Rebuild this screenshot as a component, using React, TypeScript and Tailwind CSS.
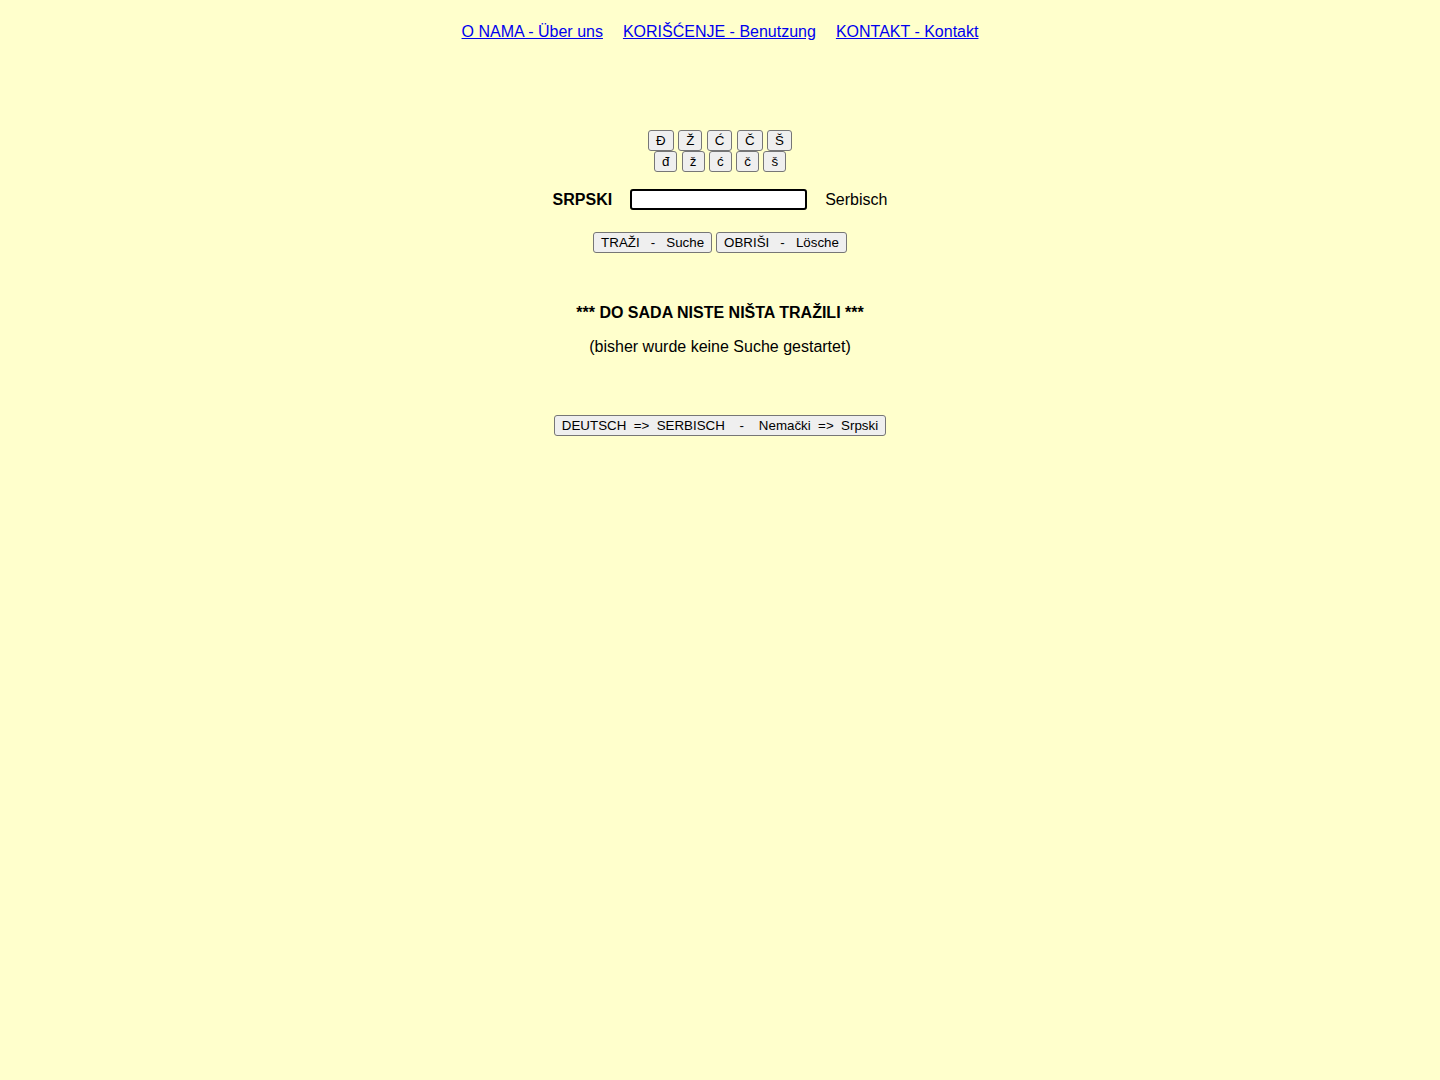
import React from "react";

const btn =
  "bg-[#efefef] border border-[#767676] rounded-[3px] text-[13.333px] leading-[15px] text-black py-[2px] whitespace-pre";

export default function App() {
  const upper = ["Đ", "Ž", "Ć", "Č", "Š"];
  const lower = ["đ", "ž", "ć", "č", "š"];
  return (
    <div className="min-h-[1080px] w-full bg-[#ffffcc] text-black font-['Liberation_Sans',Arial,sans-serif] text-[16px]">
      <div className="flex justify-center gap-[20px] pt-[22px] leading-[20px]">
        <a href="#" className="text-[#0000ee] underline">O NAMA - Über uns</a>
        <a href="#" className="text-[#0000ee] underline">KORIŠĆENJE - Benutzung</a>
        <a href="#" className="text-[#0000ee] underline">KONTAKT - Kontakt</a>
      </div>
      <div className="flex flex-col items-center mt-[88px]">
        <div className="flex gap-[4.5px]">
          {upper.map((c) => (
            <button key={c} className={btn + " h-[21px] px-[7px]"}>{c}</button>
          ))}
        </div>
        <div className="flex gap-[4.5px]">
          {lower.map((c) => (
            <button key={c} className={btn + " h-[21px] px-[7px]"}>{c}</button>
          ))}
        </div>
        <div className="flex items-center mt-[17px] h-[21px]">
          <span className="font-bold">SRPSKI</span>
          <input className="ml-[18px] w-[177px] h-[21px] bg-white border-2 border-black rounded-[3px] outline-none" />
          <span className="ml-[18px]">Serbisch</span>
        </div>
        <div className="flex gap-[4px] mt-[22px]">
          <button className={btn + " h-[21px] px-[7px]"}>{"TRAŽI   -   Suche"}</button>
          <button className={btn + " h-[21px] px-[7px]"}>{"OBRIŠI   -   Lösche"}</button>
        </div>
        <div className="mt-[50px] font-bold leading-[20px]">*** DO SADA NISTE NIŠTA TRAŽILI ***</div>
        <div className="mt-[14px] leading-[20px]">(bisher wurde keine Suche gestartet)</div>
        <button className={btn + " h-[21px] px-[7px] mt-[58px]"}>{"DEUTSCH  =>  SERBISCH    -    Nemački  =>  Srpski"}</button>
      </div>
    </div>
  );
}
